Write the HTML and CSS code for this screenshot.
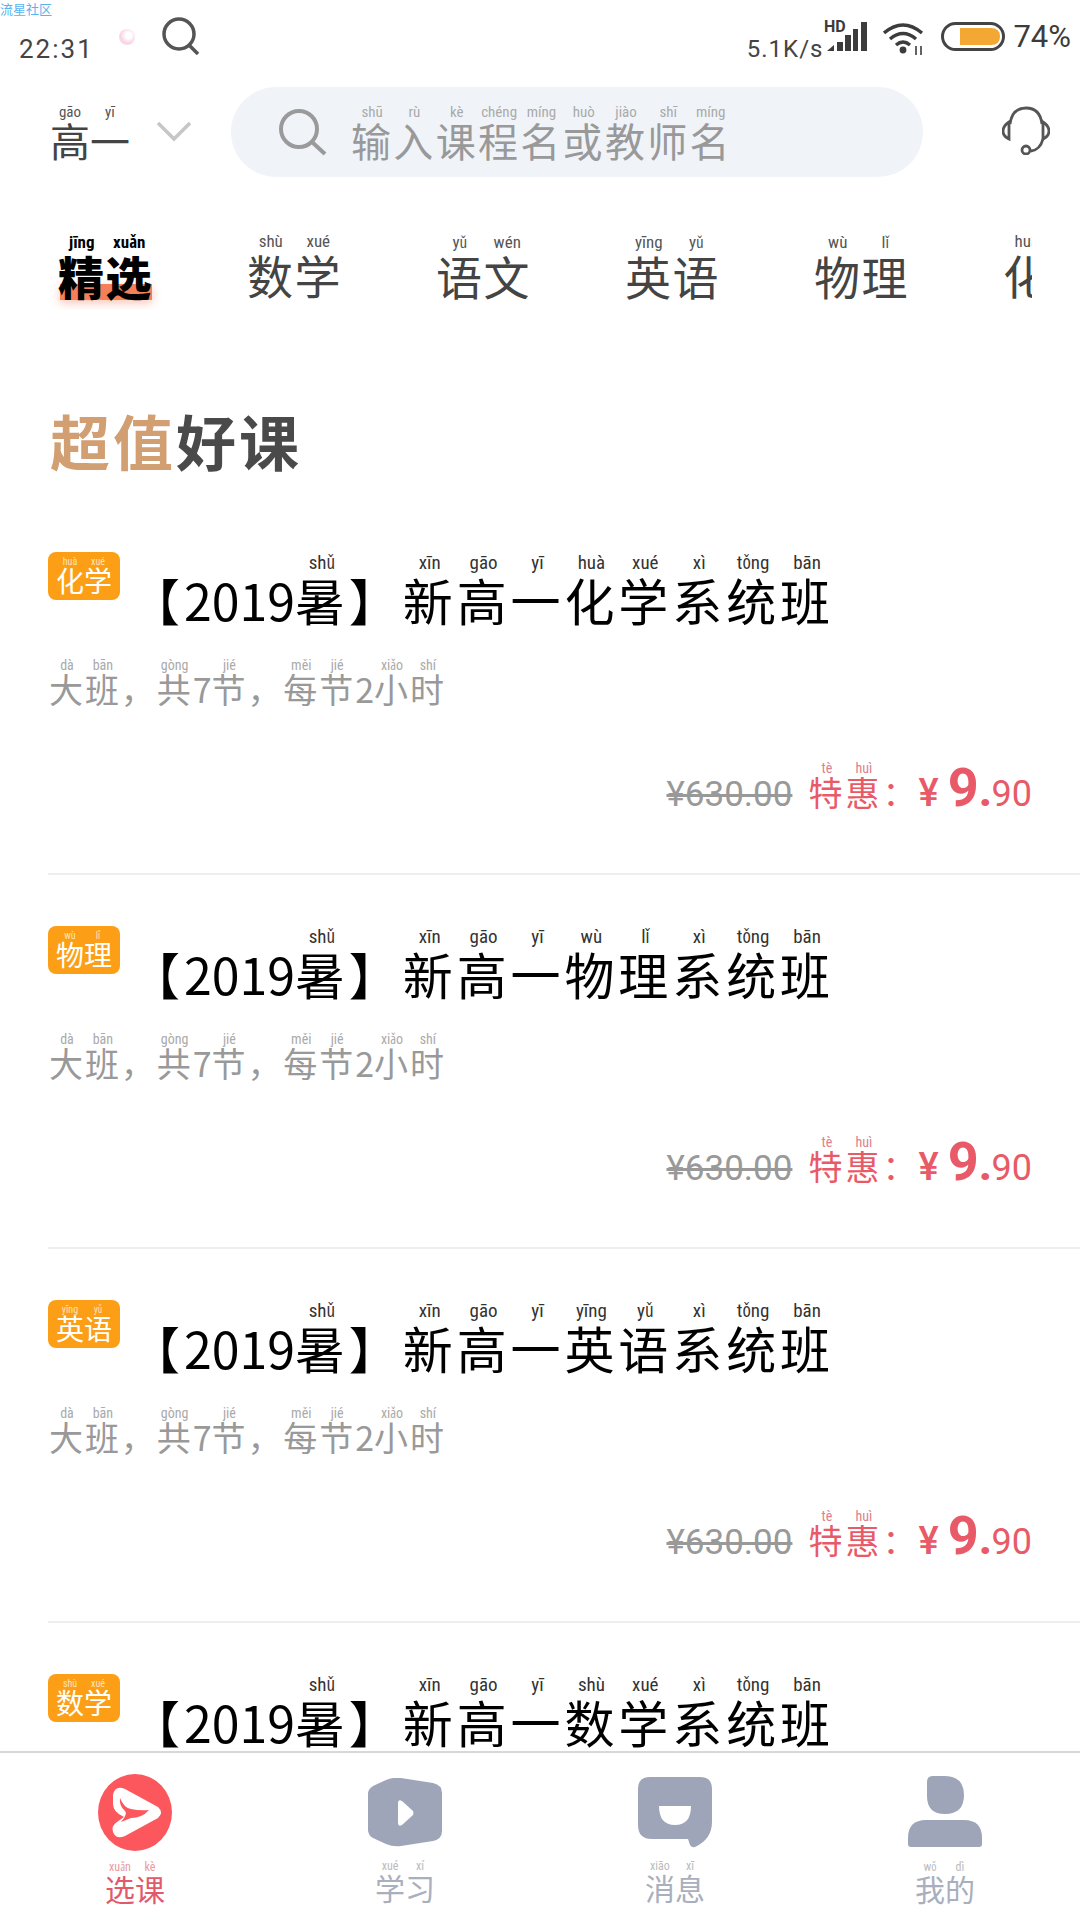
FILE: index.html
```html
<!DOCTYPE html>
<html lang="zh">
<head>
<meta charset="utf-8">
<title>选课</title>
<link rel="stylesheet" href="styles.css">
</head>
<body>
<div class="screen">
  <div class="watermark">流星社区</div>

  <div class="status">
    <div class="status-left">
      <span class="time">22:31</span>
      <span class="blob"></span>
      <svg class="status-search" viewBox="0 0 38 38"><circle cx="17" cy="17" r="15" fill="none" stroke="#555" stroke-width="3.5"/><path d="M27 28l9 9" stroke="#555" stroke-width="3.5" fill="none"/></svg>
    </div>
    <div class="status-right">
      <span class="speed">5.1K/s</span>
      <svg class="signal" viewBox="0 0 44 32"><text x="1" y="12" class="hd">HD</text><path d="M4 31l7-6v6z M14 22h6v9h-6z M22 15h6v16h-6z M30 9h5v22h-5z M38 2h6v29h-6z" fill="#3c3c3c"/></svg>
      <svg class="wifi" viewBox="0 0 42 33"><g fill="none" stroke="#3c3c3c" stroke-width="3.4"><path d="M1 11Q20 -5 39 11"/><path d="M7 17Q20 6 33 17"/><path d="M13 23Q20 17 27 23"/></g><circle cx="20" cy="28" r="3.4" fill="#3c3c3c"/><path d="M33 24v9M38 24v9" stroke="#3c3c3c" stroke-width="1.6"/></svg>
      <svg class="battery" viewBox="0 0 64 29"><rect x="1.5" y="1.5" width="61" height="26" rx="13" fill="#fff" stroke="#444" stroke-width="3"/><path d="M19 6H50Q59 6 59 14.500Q59 23 50 23H19z" fill="#f2a833"/></svg>
      <span class="percent">74%</span>
    </div>
  </div>

  <div class="header">
    <div class="grade">
      <span class="grade-text"><ruby>高<rt>gāo</rt></ruby><ruby>一<rt>yī</rt></ruby></span>
      <svg class="chevron" viewBox="0 0 36 21"><path d="M2 2l16 16L34 2" fill="none" stroke="#c6c6c6" stroke-width="3.500"/></svg>
    </div>
    <div class="search">
      <svg class="search-icon" viewBox="0 0 48 48"><circle cx="20" cy="21" r="18" fill="none" stroke="#9a9a9a" stroke-width="4"/><path d="M33 34l13 12" stroke="#9a9a9a" stroke-width="4" fill="none"/></svg>
      <span class="search-text"><ruby>输<rt>shū</rt></ruby><ruby>入<rt>rù</rt></ruby><ruby>课<rt>kè</rt></ruby><ruby>程<rt>chéng</rt></ruby><ruby>名<rt>míng</rt></ruby><ruby>或<rt>huò</rt></ruby><ruby>教<rt>jiào</rt></ruby><ruby>师<rt>shī</rt></ruby><ruby>名<rt>míng</rt></ruby></span>
    </div>
    <svg class="headset" viewBox="0 0 48 49"><g fill="none" stroke="#555" stroke-width="2.800"><path d="M8 18Q10 2 24 2Q38 2 40 18"/><path d="M7 16Q1 20 1 25Q1 30 7 33z"/><path d="M41 16Q47 20 47 25Q47 30 41 33z"/><path d="M41 33Q38 44 29 45"/><circle cx="24" cy="44" r="4"/></g></svg>
  </div>

  <div class="tabs">
    <div class="tab tab-active"><ruby>精<rt>jīng</rt></ruby><ruby>选<rt>xuǎn</rt></ruby></div>
    <div class="tab"><ruby>数<rt>shù</rt></ruby><ruby>学<rt>xué</rt></ruby></div>
    <div class="tab"><ruby>语<rt>yǔ</rt></ruby><ruby>文<rt>wén</rt></ruby></div>
    <div class="tab"><ruby>英<rt>yīng</rt></ruby><ruby>语<rt>yǔ</rt></ruby></div>
    <div class="tab"><ruby>物<rt>wù</rt></ruby><ruby>理<rt>lǐ</rt></ruby></div>
    <div class="tab"><ruby>化<rt>huà</rt></ruby><ruby>学<rt>xué</rt></ruby></div>
  </div>

  <div class="section-title"><span class="accent">超值</span><span>好课</span></div>

  <div class="list">
    <div class="card">
      <div class="title-row">
        <span class="badge"><ruby>化<rt>huà</rt></ruby><ruby>学<rt>xué</rt></ruby></span>
        <span class="title">【<span class="num">2019</span><ruby>暑<rt>shǔ</rt></ruby>】<ruby>新<rt>xīn</rt></ruby><ruby>高<rt>gāo</rt></ruby><ruby>一<rt>yī</rt></ruby><ruby>化<rt>huà</rt></ruby><ruby>学<rt>xué</rt></ruby><ruby>系<rt>xì</rt></ruby><ruby>统<rt>tǒng</rt></ruby><ruby>班<rt>bān</rt></ruby></span>
      </div>
      <div class="sub"><ruby>大<rt>dà</rt></ruby><ruby>班<rt>bān</rt></ruby>，<ruby>共<rt>gòng</rt></ruby><span class="num">7</span><ruby>节<rt>jié</rt></ruby>，<ruby>每<rt>měi</rt></ruby><ruby>节<rt>jié</rt></ruby><span class="num">2</span><ruby>小<rt>xiǎo</rt></ruby><ruby>时<rt>shí</rt></ruby></div>
      <div class="price-row">
        <span class="old-price">¥630.00</span>
        <span class="deal"><ruby>特<rt>tè</rt></ruby><ruby>惠<rt>huì</rt></ruby>：</span>
        <span class="yen">¥</span><span class="big">9</span><span class="dot">.</span><span class="cents">90</span>
      </div>
    </div>
    <div class="card">
      <div class="title-row">
        <span class="badge"><ruby>物<rt>wù</rt></ruby><ruby>理<rt>lǐ</rt></ruby></span>
        <span class="title">【<span class="num">2019</span><ruby>暑<rt>shǔ</rt></ruby>】<ruby>新<rt>xīn</rt></ruby><ruby>高<rt>gāo</rt></ruby><ruby>一<rt>yī</rt></ruby><ruby>物<rt>wù</rt></ruby><ruby>理<rt>lǐ</rt></ruby><ruby>系<rt>xì</rt></ruby><ruby>统<rt>tǒng</rt></ruby><ruby>班<rt>bān</rt></ruby></span>
      </div>
      <div class="sub"><ruby>大<rt>dà</rt></ruby><ruby>班<rt>bān</rt></ruby>，<ruby>共<rt>gòng</rt></ruby><span class="num">7</span><ruby>节<rt>jié</rt></ruby>，<ruby>每<rt>měi</rt></ruby><ruby>节<rt>jié</rt></ruby><span class="num">2</span><ruby>小<rt>xiǎo</rt></ruby><ruby>时<rt>shí</rt></ruby></div>
      <div class="price-row">
        <span class="old-price">¥630.00</span>
        <span class="deal"><ruby>特<rt>tè</rt></ruby><ruby>惠<rt>huì</rt></ruby>：</span>
        <span class="yen">¥</span><span class="big">9</span><span class="dot">.</span><span class="cents">90</span>
      </div>
    </div>
    <div class="card">
      <div class="title-row">
        <span class="badge"><ruby>英<rt>yīng</rt></ruby><ruby>语<rt>yǔ</rt></ruby></span>
        <span class="title">【<span class="num">2019</span><ruby>暑<rt>shǔ</rt></ruby>】<ruby>新<rt>xīn</rt></ruby><ruby>高<rt>gāo</rt></ruby><ruby>一<rt>yī</rt></ruby><ruby>英<rt>yīng</rt></ruby><ruby>语<rt>yǔ</rt></ruby><ruby>系<rt>xì</rt></ruby><ruby>统<rt>tǒng</rt></ruby><ruby>班<rt>bān</rt></ruby></span>
      </div>
      <div class="sub"><ruby>大<rt>dà</rt></ruby><ruby>班<rt>bān</rt></ruby>，<ruby>共<rt>gòng</rt></ruby><span class="num">7</span><ruby>节<rt>jié</rt></ruby>，<ruby>每<rt>měi</rt></ruby><ruby>节<rt>jié</rt></ruby><span class="num">2</span><ruby>小<rt>xiǎo</rt></ruby><ruby>时<rt>shí</rt></ruby></div>
      <div class="price-row">
        <span class="old-price">¥630.00</span>
        <span class="deal"><ruby>特<rt>tè</rt></ruby><ruby>惠<rt>huì</rt></ruby>：</span>
        <span class="yen">¥</span><span class="big">9</span><span class="dot">.</span><span class="cents">90</span>
      </div>
    </div>
    <div class="card">
      <div class="title-row">
        <span class="badge"><ruby>数<rt>shù</rt></ruby><ruby>学<rt>xué</rt></ruby></span>
        <span class="title">【<span class="num">2019</span><ruby>暑<rt>shǔ</rt></ruby>】<ruby>新<rt>xīn</rt></ruby><ruby>高<rt>gāo</rt></ruby><ruby>一<rt>yī</rt></ruby><ruby>数<rt>shù</rt></ruby><ruby>学<rt>xué</rt></ruby><ruby>系<rt>xì</rt></ruby><ruby>统<rt>tǒng</rt></ruby><ruby>班<rt>bān</rt></ruby></span>
      </div>
    </div>
  </div>

  <nav class="nav">
    <div class="nav-item nav-active">
      <div class="nav-icon"><svg class="icon-a" viewBox="0 0 74 77"><ellipse cx="37" cy="38.500" rx="37" ry="38.500" fill="#fb575d"/><path d="M27 15L60 33Q66 38.500 60 44L27 62Q18 66 15 58Q13 52 19 48L26 43Q15 38 15 30L15 21Q17 11 27 15Z" fill="#fff"/><path d="M22 24Q26 34 33 35Q42 37 51 36Q44 44 33 44L23 48Q30 40 27 37Q21 32 22 24Z" fill="#fb575d"/></svg></div>
      <span class="nav-label"><ruby>选<rt>xuǎn</rt></ruby><ruby>课<rt>kè</rt></ruby></span>
    </div>
    <div class="nav-item">
      <div class="nav-icon"><svg class="icon-b" viewBox="0 0 74 69"><path d="M0 16Q0 11 5 8L18 2Q25 -1 33 0L65 5Q74 7 74 15L74 53Q74 61 65 63L33 68Q25 69 18 66L5 60Q0 57 0 52Z" fill="#9ea5b8"/><path d="M30 25Q30 21 34 23L45 33Q46 35 45 37L34 47Q30 49 30 45Z" fill="#fff"/></svg></div>
      <span class="nav-label"><ruby>学<rt>xué</rt></ruby><ruby>习<rt>xí</rt></ruby></span>
    </div>
    <div class="nav-item">
      <div class="nav-icon"><svg class="icon-c" viewBox="0 0 74 71"><path d="M12 0H62Q74 0 74 12V45Q74 62 57 70Q54 71 52 68L50 62H14Q0 62 0 48V12Q0 0 12 0Z" fill="#9ea5b8"/><path d="M21 29H53Q53 48 37 48Q21 48 21 29Z" fill="#fff"/></svg></div>
      <span class="nav-label"><ruby>消<rt>xiāo</rt></ruby><ruby>息<rt>xī</rt></ruby></span>
    </div>
    <div class="nav-item">
      <div class="nav-icon"><svg class="icon-d" viewBox="0 0 74 72"><path d="M19 6Q19 0 25 0H36Q56 0 56 19Q56 38 37 38Q19 38 19 20Z" fill="#9ea5b8"/><path d="M0 62Q0 44 18 44H56Q74 44 74 62V68Q74 71 71 71H3Q0 71 0 68Z" fill="#9ea5b8"/></svg></div>
      <span class="nav-label"><ruby>我<rt>wǒ</rt></ruby><ruby>的<rt>dì</rt></ruby></span>
    </div>
  </nav>
</div>
</body>
</html>
```
FILE: styles.css
```css
* { box-sizing: border-box; }
html, body { margin: 0; padding: 0; background: #fff; }
body { font-family: "Noto Sans CJK SC", "Noto Sans", sans-serif; }

.screen { position: relative; width: 1080px; height: 1920px; overflow: hidden; background: #fff; display: flex; flex-direction: column; }

ruby { ruby-position: over; line-height: 1; }
rt { font-family: "Roboto", "Open Sans", sans-serif; font-stretch: 75%; font-weight: 400; letter-spacing: 0; line-height: 1; text-align: center; }

.watermark { position: absolute; left: 0; top: 0; font-size: 13px; line-height: 18px; color: #58b4ee; }

.status { height: 87px; flex: none; display: flex; justify-content: space-between; padding: 17px 9px 0 19px; color: #444; }
.status-left { display: flex; align-items: flex-start; }
.time { font-family: Roboto, sans-serif; font-size: 26px; line-height: 30px; letter-spacing: 2px; margin-top: 17px; width: 100px; color: #444; }
.blob { width: 16px; height: 16px; border-radius: 50%; background: radial-gradient(circle at 60% 40%, #fff 20%, #f8d3e6 60%, #fdeef6 100%); margin-top: 12px; }
.status-search { width: 38px; height: 38px; margin-left: 27px; }
.status-right { display: flex; align-items: flex-start; }
.speed { font-family: Roboto, sans-serif; font-size: 24px; line-height: 30px; margin-top: 17px; letter-spacing: 1px; width: 81px; text-align: right; white-space: nowrap; }
.signal { width: 44px; height: 32px; margin-top: 3px; overflow: visible; }
.hd { font: 700 16px Roboto, sans-serif; fill: #3c3c3c; }
.wifi { width: 42px; height: 33px; margin: 5px 0 0 16px; }
.battery { width: 64px; height: 29px; margin: 5px 0 0 16px; }
.percent { font-family: Roboto, sans-serif; font-size: 31px; line-height: 36px; margin: 2px 0 0 8px; color: #3c3c3c; }

.header { height: 90px; flex: none; display: flex; align-items: center; padding: 0 30px 0 50px; }
.grade { display: flex; align-items: flex-start; width: 181px; flex: none; }
.grade-text { font-size: 40px; letter-spacing: 0; color: #444; line-height: 1; padding-top: 10px; white-space: nowrap; }
.grade-text rt { font-size: 15px; color: #555; }
.chevron { width: 36px; height: 21px; margin: 16px 0 0 26px; }
.search { width: 692px; height: 90px; flex: none; border-radius: 45px; background: #f0f4f9; display: flex; align-items: center; padding-left: 48px; }
.search-icon { width: 48px; height: 48px; flex: none; }
.search-text { margin-left: 24px; font-size: 40px; letter-spacing: 2.300px; color: #999; white-space: nowrap; line-height: 1; padding-top: 8px; }
.search-text rt { font-size: 15px; color: #aaa; }
.headset { width: 48px; height: 49px; margin: 0 0 4px 79px; flex: none; }

.tabs { flex: none; display: flex; margin: 45px 48px 0; height: 88px; overflow: hidden; padding-top: 14px; }
.tab { position: relative; flex: none; width: 189px; padding-left: 10px; font-size: 46px; letter-spacing: 1.500px; color: #444; line-height: 1; white-space: nowrap; }
.tab rt { font-size: 17px; color: #555; position: relative; top: -2px; }
.tab-active { color: #000; font-weight: 900; }
.tab-active rt { color: #000; font-weight: 700; }
.tab-active::before { content: ""; position: absolute; left: 12px; top: 48px; width: 92px; height: 16px; background: #f57f59; box-shadow: 0 3px 10px rgba(245,127,89,.45); }
.tab ruby { position: relative; }

.section-title { flex: none; margin: 97px 0 0 50px; font-size: 60px; font-weight: 700; line-height: 66px; color: #4a4a4a; letter-spacing: 3px; }
.accent { color: #d29f72; }

.list { flex: none; margin: 79px 0 0 48px; }
.card { height: 323px; margin-bottom: 51px; border-bottom: 2px solid #eee; }
.title-row { display: flex; align-items: flex-start; height: 75px; }
.badge { width: 72px; height: 48px; flex: none; border-radius: 8px; background: #fc9f17; color: #fff; font-size: 28px; line-height: 1; text-align: center; padding-top: 14px; white-space: nowrap; }
.badge rt { font-size: 10px; color: #fbe3b8; }
.title { margin-left: 10px; font-size: 50px; letter-spacing: 3.900px; color: #000; line-height: 1; padding-top: 22px; white-space: nowrap; }
.title .num { letter-spacing: 0; }
.title rt { font-size: 19px; color: #333; position: relative; top: -3px; }
.sub { margin: 32px 0 0 1px; font-size: 34px; letter-spacing: 1.900px; color: #999; line-height: 1; white-space: nowrap; }
.sub .num { letter-spacing: 0; }
.sub rt { font-size: 14px; color: #aaa; }
.price-row { display: flex; align-items: baseline; justify-content: flex-end; margin-top: 55px; padding-right: 48px; color: #e95a68; line-height: 1; white-space: nowrap; }
.old-price { font-family: Roboto, sans-serif; font-size: 35px; color: #999; text-decoration: line-through; margin-right: 16px; }
.deal { font-size: 34px; letter-spacing: 3px; }
.deal rt { font-size: 14px; color: #e0808a; }
.yen { font-family: Roboto, sans-serif; font-size: 38px; font-weight: 500; margin-left: -1px; }
.big { font-family: Roboto, sans-serif; font-size: 54px; font-weight: 700; margin-left: 9px; }
.dot { font-family: Roboto, sans-serif; font-size: 48px; font-weight: 700; margin: 0 -1px 0 0; }
.cents { font-family: Roboto, sans-serif; font-size: 36px; font-weight: 400; }

.nav { position: absolute; left: 0; right: 0; top: 1751px; height: 169px; background: #fff; border-top: 2px solid #d8d8d8; display: grid; grid-template-columns: repeat(4, 1fr); }
.nav-item { display: flex; flex-direction: column; align-items: center; color: #a9afbd; }
.nav-icon { height: 80px; margin-top: 19px; display: flex; align-items: center; justify-content: center; }
.nav-icon svg { display: block; }
.icon-a { width: 74px; height: 77px; }
.icon-b { width: 74px; height: 69px; }
.icon-c { width: 74px; height: 71px; }
.icon-d { width: 74px; height: 72px; }
.nav-label { margin-top: 9px; font-size: 30px; line-height: 1; white-space: nowrap; }
.nav-label rt { font-size: 12px; color: #bbb; }
.nav-active { color: #e2596a; }
.nav-active rt { color: #e89aa3; }
```
